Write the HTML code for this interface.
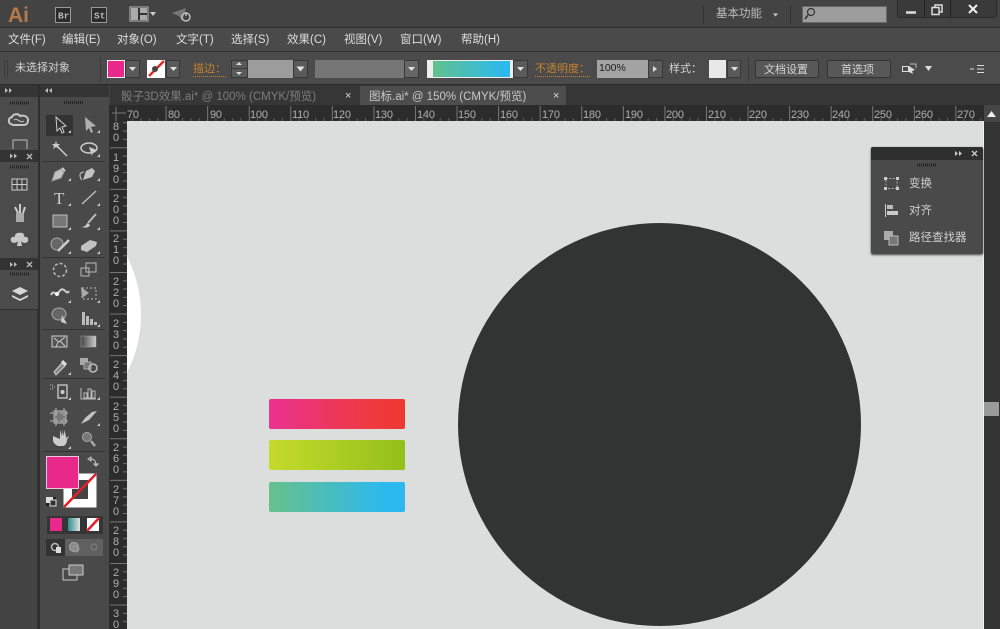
<!DOCTYPE html>
<html><head><meta charset="utf-8"><style>
html,body{margin:0;padding:0;background:#444}
#p{position:relative;width:1000px;height:629px;overflow:hidden;background:#444;font-family:"Liberation Sans","Noto Sans CJK SC",sans-serif;color:#d6d6d6;font-size:12px;filter:blur(.35px)}
#p div{position:absolute;box-sizing:border-box}
#p span{position:absolute;white-space:nowrap;line-height:14px}
.m{top:33px;font-size:11.5px;color:#dcdcdc}
.t{top:61px;font-size:11px;color:#d4d4d4}
.o{top:63px;font-size:11px;color:#c5812f;border-bottom:1px dotted #c5812f;line-height:13px!important}
.dd{background:#5a5a5a;border:1px solid #383838;height:18px;top:60px}
.r{top:108px;font-size:11px;color:#b0b0b0;letter-spacing:-.2px}
.v{left:112px;font-size:11px;color:#b0b0b0;width:8px;text-align:center;transform:translateY(1px)}
svg{position:absolute;left:0;top:0}
</style></head><body><div id="p">
<div style="left:0;top:0;width:1000px;height:28px;background:#434343;border-bottom:1px solid #2f2f2f"></div>
<div style="left:0;top:28px;width:1000px;height:24px;background:#4a4a4a;border-bottom:1px solid #2f2f2f"></div>
<div style="left:0;top:52px;width:1000px;height:33px;background:#4b4b4b;border-bottom:1px solid #2c2c2c"></div>
<div style="left:110px;top:85px;width:890px;height:20px;background:#363636"></div>
<div style="left:360px;top:86px;width:206px;height:19px;background:#4d4d4d"></div>
<div style="left:110px;top:105px;width:874px;height:16px;background:#2c2c2c"></div>
<div style="left:109px;top:105px;width:18px;height:524px;background:#2c2c2c"></div>
<div style="left:127px;top:121px;width:857px;height:508px;background:#dcdedd;overflow:hidden">
  <div style="left:-241px;top:66px;width:255px;height:255px;border-radius:50%;background:#fff"></div>
  <div style="left:330.5px;top:101.5px;width:403px;height:403px;border-radius:50%;background:#323434;box-shadow:0 0 1px #eef0f0"></div>
  <div style="left:141.5px;top:277.5px;width:136px;height:30.5px;border-radius:2px;background:linear-gradient(90deg,#ea3290,#ee3a3a 80%,#ed3733)"></div>
  <div style="left:141.5px;top:319px;width:136px;height:30px;border-radius:2px;background:linear-gradient(90deg,#c5da2b,#93c01a)"></div>
  <div style="left:141.5px;top:360.5px;width:136px;height:30px;border-radius:2px;background:linear-gradient(90deg,#67c08b,#2cb9ef 85%)"></div>
</div>
<div style="left:983px;top:121px;width:1px;height:508px;background:#f0f0f0"></div>
<div style="left:984px;top:105px;width:16px;height:524px;background:#333"></div>
<div style="left:984px;top:105px;width:16px;height:17px;background:#464646"></div>
<div style="left:984px;top:402px;width:15px;height:14px;background:#9a9a9a"></div>

<!-- left panels -->
<div style="left:0;top:85px;width:38px;height:544px;background:#434343;border-right:1px solid #333"></div>
<div style="left:0;top:85px;width:38px;height:12px;background:#353535"></div>
<div style="left:0;top:97px;width:38px;height:53px;background:#4b4b4b"></div>
<div style="left:0;top:150px;width:38px;height:12px;background:#333"></div>
<div style="left:0;top:162px;width:38px;height:96px;background:#4b4b4b"></div>
<div style="left:0;top:258px;width:38px;height:12px;background:#333"></div>
<div style="left:0;top:270px;width:38px;height:40px;background:#4b4b4b;border-bottom:1px solid #2f2f2f"></div>
<div style="left:38px;top:85px;width:2px;height:544px;background:#2e2e2e"></div>
<div style="left:40px;top:85px;width:69px;height:544px;background:#494949"></div>
<div style="left:40px;top:85px;width:69px;height:12px;background:#353535"></div>
<div style="left:46px;top:115px;width:27px;height:21px;background:#333"></div>

<!-- floating panel -->
<div style="left:871px;top:147px;width:112px;height:107px;background:#4a4a4a;border-radius:2px;box-shadow:0 1px 2px #444"></div>
<div style="left:871px;top:147px;width:112px;height:13px;background:#2f2f2f;border-radius:2px 2px 0 0"></div>
<span style="left:909px;top:177px;font-size:11.5px;color:#d0d0d0">变换</span>
<span style="left:909px;top:204px;font-size:11.5px;color:#d0d0d0">对齐</span>
<span style="left:909px;top:231px;font-size:11.5px;color:#d0d0d0">路径查找器</span>

<!-- toolbar fields -->
<div class="dd" style="left:125px;width:15px"></div>
<div class="dd" style="left:166px;width:14px"></div>
<div class="dd" style="left:231px;width:17px"></div>
<div style="left:248px;top:60px;width:45px;height:18px;background:#9c9c9c"></div>
<div class="dd" style="left:293px;width:15px"></div>
<div style="left:315px;top:60px;width:89px;height:18px;background:#757575"></div>
<div class="dd" style="left:404px;width:15px;background:#666"></div>
<div style="left:107px;top:60px;width:18px;height:18px;background:#e8298b;border:1px solid #eee"></div>
<div style="left:147px;top:60px;width:18px;height:18px;background:#fff"></div>
<div style="left:427px;top:60px;width:86px;height:18px;background:linear-gradient(90deg,#62c08c,#2db9ee 92%);border:1px solid #eee;border-left-width:6px;border-right-width:3px"></div>
<div class="dd" style="left:513px;width:15px"></div>
<div style="left:597px;top:60px;width:51px;height:18px;background:#a3a3a3"></div>
<div class="dd" style="left:648px;width:15px"></div>
<div style="left:709px;top:60px;width:17px;height:18px;background:#e8e8e8"></div>
<div class="dd" style="left:727px;width:14px"></div>
<div style="left:755px;top:60px;width:64px;height:18px;background:#585858;border:1px solid #333;border-radius:2px"></div>
<div style="left:827px;top:60px;width:64px;height:18px;background:#585858;border:1px solid #333;border-radius:2px"></div>
<div style="left:802px;top:6px;width:85px;height:17px;background:#9c9c9c;border:1px solid #666"></div>
<div style="left:897px;top:0;width:100px;height:18px;background:#3a3a3a;border:1px solid #2a2a2a;border-top:0;border-radius:0 0 3px 3px"></div>

<!-- title text -->
<span style="left:8px;top:7px;font-size:21px;line-height:18px;font-weight:bold;color:#b5794a">Ai</span>
<span style="left:716px;top:7px;font-size:11.5px;color:#bdbdbd">基本功能</span>

<span class="m" style="left:8px">文件(F)</span><span class="m" style="left:62px">编辑(E)</span><span class="m" style="left:117px">对象(O)</span><span class="m" style="left:176px">文字(T)</span><span class="m" style="left:231px">选择(S)</span><span class="m" style="left:287px">效果(C)</span><span class="m" style="left:344px">视图(V)</span><span class="m" style="left:400px">窗口(W)</span><span class="m" style="left:461px">帮助(H)</span>

<span class="t" style="left:15px">未选择对象</span>
<span class="o" style="left:193px">描边：</span>
<span class="o" style="left:535px">不透明度：</span>
<span style="left:599px;top:61px;font-size:10.5px;color:#1c1c1c">100%</span>
<span class="t" style="left:669px;top:62px">样式：</span>
<span class="t" style="left:764px;top:63px">文档设置</span>
<span class="t" style="left:841px;top:63px">首选项</span>

<span style="left:121px;top:90px;font-size:11.5px;color:#7c7c7c">骰子3D效果.ai* @ 100% (CMYK/预览)</span>
<span style="left:345px;top:89px;font-size:11px;color:#ddd">×</span>
<span style="left:369px;top:90px;font-size:11.5px;color:#c8c8c8">图标.ai* @ 150% (CMYK/预览)</span>
<span style="left:553px;top:89px;font-size:11px;color:#ddd">×</span>

<!-- rulers text -->
<span class="r" style="left:127px">70</span><span class="r" style="left:168px">80</span><span class="r" style="left:210px">90</span><span class="r" style="left:250px">100</span><span class="r" style="left:292px">110</span><span class="r" style="left:333px">120</span><span class="r" style="left:375px">130</span><span class="r" style="left:417px">140</span><span class="r" style="left:458px">150</span><span class="r" style="left:500px">160</span><span class="r" style="left:542px">170</span><span class="r" style="left:583px">180</span><span class="r" style="left:625px">190</span><span class="r" style="left:666px">200</span><span class="r" style="left:708px">210</span><span class="r" style="left:749px">220</span><span class="r" style="left:791px">230</span><span class="r" style="left:832px">240</span><span class="r" style="left:874px">250</span><span class="r" style="left:915px">260</span><span class="r" style="left:957px">270</span>

<span class="v" style="top:119px">8</span><span class="v" style="top:130px">0</span>
<span class="v" style="top:150px">1</span><span class="v" style="top:161px">9</span><span class="v" style="top:172px">0</span>
<span class="v" style="top:191px">2</span><span class="v" style="top:202px">0</span><span class="v" style="top:213px">0</span>
<span class="v" style="top:231px">2</span><span class="v" style="top:242px">1</span><span class="v" style="top:253px">0</span>
<span class="v" style="top:274px">2</span><span class="v" style="top:285px">2</span><span class="v" style="top:296px">0</span>
<span class="v" style="top:316px">2</span><span class="v" style="top:327px">3</span><span class="v" style="top:338px">0</span>
<span class="v" style="top:357px">2</span><span class="v" style="top:368px">4</span><span class="v" style="top:379px">0</span>
<span class="v" style="top:399px">2</span><span class="v" style="top:410px">5</span><span class="v" style="top:421px">0</span>
<span class="v" style="top:440px">2</span><span class="v" style="top:451px">6</span><span class="v" style="top:462px">0</span>
<span class="v" style="top:482px">2</span><span class="v" style="top:493px">7</span><span class="v" style="top:504px">0</span>
<span class="v" style="top:523px">2</span><span class="v" style="top:534px">8</span><span class="v" style="top:545px">0</span>
<span class="v" style="top:565px">2</span><span class="v" style="top:576px">9</span><span class="v" style="top:587px">0</span>
<span class="v" style="top:606px">3</span><span class="v" style="top:617px">0</span>

<svg width="1000" height="629" viewBox="0 0 1000 629" fill="none">
<defs>
<pattern id="rx" x="124" y="105" width="41.57" height="16" patternUnits="userSpaceOnUse"><path d="M.5 1V16" stroke="#777"/><path d="M8.800 13V16M17.100 13V16M25.400 13V16M33.700 13V16" stroke="#606060"/></pattern>
<pattern id="ry" x="109" y="105.7" width="18" height="41.57" patternUnits="userSpaceOnUse"><path d="M1 .5H18" stroke="#777"/><path d="M14 8.800H18M14 17.100H18M14 25.400H18M14 33.700H18" stroke="#707070"/></pattern>
</defs>
<rect x="127" y="105" width="856" height="16" fill="url(#rx)"/>
<rect x="109" y="121" width="18" height="508" fill="url(#ry)"/>
<path d="M112 113H126M116 107V121" stroke="#777"/>
<path d="M987 117l4.500-6 4.500 6z" fill="#eee"/>

<!-- title bar icons -->
<rect x="55.500" y="7.500" width="15" height="15" fill="#2b2b2b" stroke="#999"/>
<rect x="91.500" y="7.500" width="15" height="15" fill="#2b2b2b" stroke="#999"/>
<text x="58" y="18.500" font-family="'Liberation Mono',monospace" font-size="9.500" font-weight="bold" fill="#bbb">Br</text>
<text x="94" y="18.500" font-family="'Liberation Mono',monospace" font-size="9.500" font-weight="bold" fill="#bbb">St</text>
<rect x="130" y="7" width="18" height="14" fill="#333" stroke="#bbb"/><path d="M131 8h7v12h-7zM140 8h7v5h-7zM140 15h7v5h-7z" fill="#aaa"/>
<path d="M150 12h6l-3 4z" fill="#ccc"/>
<path d="M172 13l14-5-4 13-3-5z" fill="#777"/><circle cx="186" cy="17" r="4" stroke="#ccc" stroke-width="1.300"/><path d="M186 12v4" stroke="#ccc" stroke-width="1.300"/>
<path d="M703.500 5V24M790.500 5V24" stroke="#333"/>
<path d="M773 13.500h5l-2.500 3z" fill="#ccc"/>
<circle cx="811" cy="12" r="3.500" stroke="#333" stroke-width="1.200"/><path d="M808 15l-3 4" stroke="#333" stroke-width="1.500"/>
<path d="M924.500 0V17M950.500 0V17" stroke="#222"/>
<path d="M906 12.500h10" stroke="#ddd" stroke-width="2.500"/>
<path d="M932 7.500h7v7h-7zM935 7.500V5h7v7h-3" stroke="#ddd" stroke-width="1.500"/>
<path d="M969 5l8 8M977 5l-8 8" stroke="#eee" stroke-width="2"/>

<!-- control bar -->
<path d="M4.500 60v18M7.500 60v18" stroke="#2e2e2e" stroke-dasharray="1 1"/>
<path d="M100.500 58v24M748.500 58v24" stroke="#3a3a3a"/>
<path d="M149 76l15-15" stroke="#e02a2a" stroke-width="2.500"/><circle cx="155" cy="69" r="3" fill="#444"/>
<path d="M129 67h7l-3.500 4zM170 67h7l-3.500 4zM296.500 66.500h8l-4 5zM408 67h7l-3.500 4zM517 67h7l-3.500 4zM731 67h7l-3.500 4z" fill="#e0e0e0"/>
<path d="M236 65h6l-3-3zM236 72h6l-3 3z" fill="#ddd"/><path d="M231 68.500h17" stroke="#383838"/>
<path d="M653 66v6l4-3z" fill="#ddd"/>
<path d="M925 66h7l-3.500 5z" fill="#ddd"/>
<rect x="902.500" y="66.500" width="6" height="5" stroke="#ddd"/><path d="M909 66l6 4-3 1 1 3-4-2z" fill="#ddd"/><path d="M910 64h6v4" stroke="#bbb"/>
<path d="M970 69h4M977 65.500h7M977 69h7M977 72.500h7" stroke="#ddd"/>

<!-- panel chrome -->
<path d="M5 88v5l3-2.500zM9 88v5l3-2.500z" fill="#bbb"/><path d="M48 88v5l-3-2.500zM52 88v5l-3-2.500z" fill="#bbb"/>
<path d="M10 103h19M64 102.500h19" stroke="#222" stroke-width="3" stroke-dasharray="1 1"/>
<path d="M10 167h19M10 274h19" stroke="#222" stroke-width="3" stroke-dasharray="1 1"/>
<path d="M10 153.500v5l3-2.500zM14 153.500v5l3-2.500zM10 262v5l3-2.500zM14 262v5l3-2.500z" fill="#bbb"/>
<path d="M27 154l5 5M32 154l-5 5M27 262l5 5M32 262l-5 5" stroke="#bbb" stroke-width="1.300"/>
<!-- left panel icons -->
<path d="M11 124c-3-1-3-6 1-7 1-3 6-4 8-1 3-1 8 0 8 4s-2 5-5 5H13z" stroke="#c6c6c6" stroke-width="2"/><path d="M14 120c3-3 6 4 10 1" stroke="#c6c6c6"/>
<path d="M13 149v-9h14v9" stroke="#bbb"/>
<rect x="12" y="179" width="15" height="11" fill="#444" stroke="#ccc"/><path d="M17 179v11M22 179v11M12 184.500h15" stroke="#ccc"/>
<rect x="16" y="213" width="8" height="9" fill="#aaa"/><path d="M15 207l3 6M20 204v9M25 207l-2 6" stroke="#ccc" stroke-width="2"/>
<path d="M20 233c3-1 5 2 4 4 3-1 5 1 4 4s-6 2-7 0l1 5h-5l1-5c-1 2-6 3-7 0s1-5 4-4c-1-2 2-5 5-4z" fill="#c8c8c8"/>
<path d="M20 287l8 4-8 4-8-4z" fill="#d8d8d8"/><path d="M12 295l8 4 8-4v2l-8 4-8-4z" fill="#d8d8d8"/>
<!-- tools -->
<g stroke="#333"><path d="M43 161.500h62M43 257.500h62M43 329.500h62M43 378.500h62M43 451.500h62"/></g>
<path d="M56 117l1 14 3-3 2 5 2-1-2-5 4-1z" fill="#333" stroke="#ccc"/>
<path d="M85 117l1 14 3-3 2 5 2-1-2-5 5-1z" fill="#b0b0b0"/>
<path d="M57 146l10 10" stroke="#ccc" stroke-width="1.500"/><path d="M56 141l1 3 3 0-2 2 1 3-3-2-3 2 1-3-2-2 3 0z" fill="#ccc"/>
<ellipse cx="89" cy="148" rx="8" ry="5" stroke="#ccc" stroke-width="1.500"/><path d="M89 147l8 3-4 2-1 4z" fill="#ccc"/>
<path d="M52 181l3-9 6-3 3 3-3 6z" fill="#c2c2c2" stroke="#999"/><path d="M62 168l3 3" stroke="#ccc" stroke-width="2"/>
<path d="M83 180l3-9 6-3 3 3-3 6z" fill="#c2c2c2"/><path d="M84 172c-6 0-4 6-2 8" stroke="#ccc"/>
<text x="54" y="204" font-family="'Liberation Serif',serif" font-size="17" fill="#ccc">T</text>
<path d="M82 204l14-13" stroke="#bbb" stroke-width="1.500"/>
<rect x="53" y="215" width="14" height="12" fill="#777" stroke="#bbb"/>
<path d="M96 214l-8 9" stroke="#bbb" stroke-width="2"/><path d="M81 227c3 0 5-1 6-4l3 2c-1 3-5 3-9 2z" fill="#ccc"/>
<circle cx="57" cy="244" r="6" fill="#666" stroke="#aaa"/><path d="M58 251l11-11" stroke="#ccc" stroke-width="2.500"/>
<path d="M81 246l9-6 7 2-1 4-9 6-6-2z" fill="#c2c2c2"/>
<circle cx="60" cy="270" r="6.500" stroke="#bbb" stroke-width="1.500" stroke-dasharray="3 2"/>
<rect x="81" y="268" width="8" height="8" stroke="#bbb"/><rect x="86" y="263" width="10" height="9" stroke="#bbb"/>
<path d="M51 295c3-6 4 1 7-2s3-5 6-3 3 4 5 1" stroke="#ccc" stroke-width="2"/><circle cx="57" cy="294" r="2" fill="#fff"/>
<rect x="82" y="288" width="14" height="11" stroke="#bbb" stroke-dasharray="2 2"/><path d="M81 287l8 6-7 5z" fill="#aaa"/>
<ellipse cx="59" cy="314" rx="7" ry="6" fill="#666" stroke="#aaa"/><path d="M62 315l5 9-6-2z" fill="#ccc"/>
<path d="M82 312h3v13h-3zM86 316h3v9h-3zM90 319h3v6h-3zM94 322h3v3h-3z" fill="#bbb"/>
<rect x="52" y="336" width="15" height="11" fill="#555" stroke="#ccc"/><path d="M54 338l5 4 6-5M58 342l-2 5M60 341l5 5" stroke="#ccc"/>
<defs><linearGradient id="gg"><stop offset="0" stop-color="#444"/><stop offset="1" stop-color="#ccc"/></linearGradient></defs>
<rect x="81" y="336" width="15" height="11" fill="url(#gg)" stroke="#aaa" stroke-width=".5"/>
<path d="M54 372l8-9 3 3-9 9z" fill="#888" stroke="#ccc"/><path d="M62 361l4 4" stroke="#ddd" stroke-width="3"/>
<rect x="80" y="358" width="8" height="7" fill="#aaa"/><rect x="84" y="362" width="7" height="7" fill="#777" stroke="#aaa"/><circle cx="93" cy="368" r="4" stroke="#bbb" stroke-width="1.500"/>
<rect x="58" y="385" width="9" height="13" stroke="#ccc" stroke-width="1.300"/><circle cx="62.500" cy="392" r="2" fill="#ccc"/><path d="M50 385h4M52 387h4M50 389h3" stroke="#bbb" stroke-dasharray="1 1"/>
<path d="M81 388v11h15M84 398v-5h3v5zM88 398v-9h3v9zM92 398v-7h3v7z" stroke="#bbb"/>
<rect x="54" y="411" width="12" height="12" fill="#777" stroke="#bbb"/><path d="M50 413h20M50 421h20M56 408v18M64 408v18" stroke="#bbb" stroke-dasharray="3 2"/>
<path d="M81 424l8-4 8-9-5 1-7 6z" fill="#c4c4c4"/>
<path d="M53 436v4c0 2 2 5 5 6h5c2 0 4-3 4-6l2-4-3 2v-6l-1 5v-7l-2 6v-7l-1 7-2-6 0 9z" fill="#ccc"/>
<circle cx="87" cy="437" r="4.500" fill="#777" stroke="#aaa"/><path d="M91 441l4 5" stroke="#aaa" stroke-width="2.500"/>
<!-- corner triangles -->
<path d="M71 133h-3l3-3zM100 133h-3l3-3zM100 157h-3l3-3zM71 181h-3l3-3zM100 181h-3l3-3zM71 206h-3l3-3zM100 206h-3l3-3zM71 230h-3l3-3zM100 230h-3l3-3zM71 254h-3l3-3zM100 254h-3l3-3zM71 303h-3l3-3zM100 303h-3l3-3zM100 327h-3l3-3zM71 375h-3l3-3zM71 400h-3l3-3zM100 400h-3l3-3zM100 426h-3l3-3zM71 449h-3l3-3z" fill="#ccc"/>
<!-- colour -->
<rect x="63.500" y="473.500" width="33" height="34" fill="#fff"/>
<rect x="72" y="480" width="16" height="19" fill="#444"/>
<path d="M64 507l32-33" stroke="#e1202c" stroke-width="2.500"/>
<rect x="46.500" y="456.500" width="32" height="32" fill="#e8298b" stroke="#f2c6dc"/>
<path d="M90 459c3 0 5 0 6 5M88 459l3-2v4zM96 466l-2-2h4z" stroke="#ccc"/>
<rect x="46" y="497" width="10" height="9" fill="#222"/><rect x="46" y="497" width="7" height="6" fill="#ddd"/><rect x="50" y="500" width="6" height="6" fill="#333" stroke="#ddd"/>
<rect x="47" y="516" width="56" height="18" fill="#353535"/>
<rect x="50" y="518" width="12" height="13" fill="#e8298b"/>
<defs><linearGradient id="gt"><stop offset="0" stop-color="#2c8f90"/><stop offset="1" stop-color="#e4e4e4"/></linearGradient></defs>
<rect x="68" y="518" width="12" height="13" fill="url(#gt)"/>
<rect x="87" y="518" width="12" height="13" fill="#fff"/><path d="M87 531l12-13" stroke="#e1202c" stroke-width="2.500"/>
<rect x="46" y="539" width="19" height="17" fill="#333"/><rect x="65" y="539" width="38" height="17" fill="#606060"/>
<circle cx="55" cy="547" r="3.500" stroke="#bbb" stroke-width="1.500"/><rect x="56" y="547" width="5" height="6" fill="#ddd"/>
<circle cx="74" cy="547" r="4.500" fill="#888" stroke="#aaa"/><circle cx="76" cy="549" r="3" stroke="#999"/>
<circle cx="94" cy="547" r="3" stroke="#777" stroke-width="1.500"/>
<rect x="63" y="569" width="14" height="11" fill="#494949" stroke="#ccc"/><rect x="69" y="565" width="14" height="10" fill="#777" stroke="#ccc"/>
<!-- float panel -->
<path d="M955 151v5l3-2.500zM959 151v5l3-2.500z" fill="#ccc"/><path d="M972 151l5 5M977 151l-5 5" stroke="#ccc" stroke-width="1.300"/>
<path d="M917 165h20" stroke="#222" stroke-width="3" stroke-dasharray="1 1"/>
<rect x="886" y="178.500" width="11" height="10" stroke="#aaa" stroke-dasharray="2 1.500"/><path d="M884 177h3v3h-3zM896 177h3v3h-3zM884 187h3v3h-3zM896 187h3v3h-3z" fill="#ccc"/>
<path d="M885.500 204v13" stroke="#ccc"/><rect x="887" y="205" width="6" height="4" fill="#bbb"/><rect x="887" y="211" width="11" height="4" fill="#ccc"/>
<rect x="884" y="231" width="9" height="9" fill="#aaa"/><rect x="889" y="236" width="9" height="9" fill="#777" stroke="#bbb"/>
</svg>
</div></body></html>
